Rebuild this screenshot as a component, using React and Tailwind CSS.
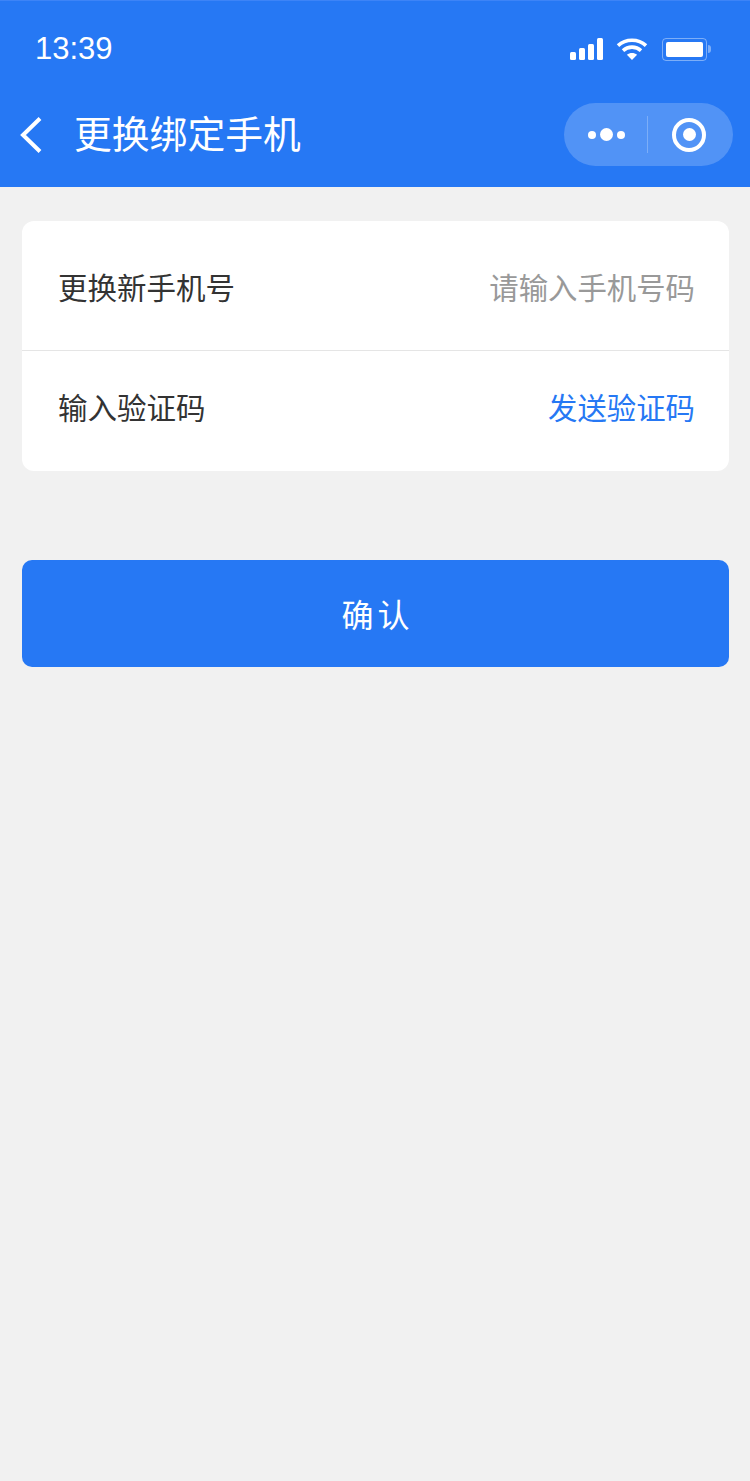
const cjk = { fontFamily: '"Noto Sans CJK SC", "Liberation Sans", sans-serif' };

function StatusIcons() {
  return (
    <div className="flex items-center">
      <svg width="35" height="22" viewBox="0 0 35 22" fill="white">
        <rect x="1" y="14" width="6" height="8" rx="1.5" />
        <rect x="10" y="10" width="6" height="12" rx="1.5" />
        <rect x="19" y="6" width="6" height="16" rx="1.5" />
        <rect x="28" y="0" width="6" height="22" rx="1.5" />
      </svg>
      <svg className="ml-[12px]" width="32" height="24" viewBox="0 0 32 24" fill="none" stroke="white" strokeWidth="3.6">
        <path d="M2 8.6C9.8 1.4 22.2 1.4 30 8.6" />
        <path d="M7 13.6C12 9 20 9 25 13.6" />
        <path d="M16 23L10.9 17.8C13.8 15.4 18.2 15.4 21.1 17.8Z" fill="white" stroke="none" />
      </svg>
      <div className="ml-[14px] flex items-center">
        <div className="flex h-[23px] w-[45px] items-center rounded-[4px] border border-white/40 p-[3px]">
          <div className="h-full w-full rounded-[2px] bg-white" />
        </div>
        <div className="ml-[1px] h-[8px] w-[3px] rounded-r-full bg-white/40" />
      </div>
    </div>
  );
}

function Capsule() {
  return (
    <div className="flex h-[63px] w-[169px] items-center rounded-full bg-white/20">
      <div className="flex w-[83px] items-center justify-center gap-[4px] pl-[1px]">
        <span className="h-[8px] w-[8px] rounded-full bg-white" />
        <span className="h-[13px] w-[13px] rounded-full bg-white" />
        <span className="h-[8px] w-[8px] rounded-full bg-white" />
      </div>
      <div className="h-[37px] w-px bg-white/25" />
      <div className="flex flex-1 items-center justify-center pr-[3px]">
        <div className="flex h-[34px] w-[34px] items-center justify-center rounded-full border-[4px] border-white">
          <span className="h-[13px] w-[13px] rounded-full bg-white" />
        </div>
      </div>
    </div>
  );
}

export default function App() {
  return (
    <div className="min-h-[1481px] bg-[#f1f1f1]" style={cjk}>
      <header className="h-[187px] border-t border-[#3d84f7] bg-[#2678f4] text-white">
        <div className="flex h-[93px] items-center justify-between pl-[35px] pr-[39px] pt-[3px]">
          <span className="text-[31px]" style={{ fontFamily: '"Liberation Sans", sans-serif' }}>13:39</span>
          <StatusIcons />
        </div>
        <div className="flex h-[76px] items-center pl-[20px] pr-[17px] pt-[5px]">
          <svg width="22" height="36" viewBox="0 0 22 36" fill="none" stroke="white" strokeWidth="4">
            <path d="M20 1.5L3 18L20 34.5" />
          </svg>
          <h1 className="ml-[32px] flex-1 pb-[6px] text-[37.8px] leading-none font-normal">更换绑定手机</h1>
          <Capsule />
        </div>
      </header>

      <main className="px-[22px] pt-[34px] pr-[21px]">
        <section className="rounded-[12px] bg-white">
          <div className="flex h-[130px] items-center justify-between border-b border-[#e5e5e5] pl-[36px] pr-[34px] pt-[1px]">
            <span className="text-[29.5px] text-[#333333]">更换新手机号</span>
            <span className="text-[29.4px] text-[#999999]">请输入手机号码</span>
          </div>
          <div className="flex h-[120px] items-center justify-between pl-[36px] pr-[34px] pb-[10px]">
            <span className="text-[29.5px] text-[#333333]">输入验证码</span>
            <span className="text-[29.4px] text-[#2678f4]">发送验证码</span>
          </div>
        </section>

        <button className="mt-[89px] h-[107px] w-full rounded-[10px] bg-[#2678f4] pb-[1px] pl-[4px] text-[32px] tracking-[4px] text-white">
          确认
        </button>
      </main>
    </div>
  );
}
